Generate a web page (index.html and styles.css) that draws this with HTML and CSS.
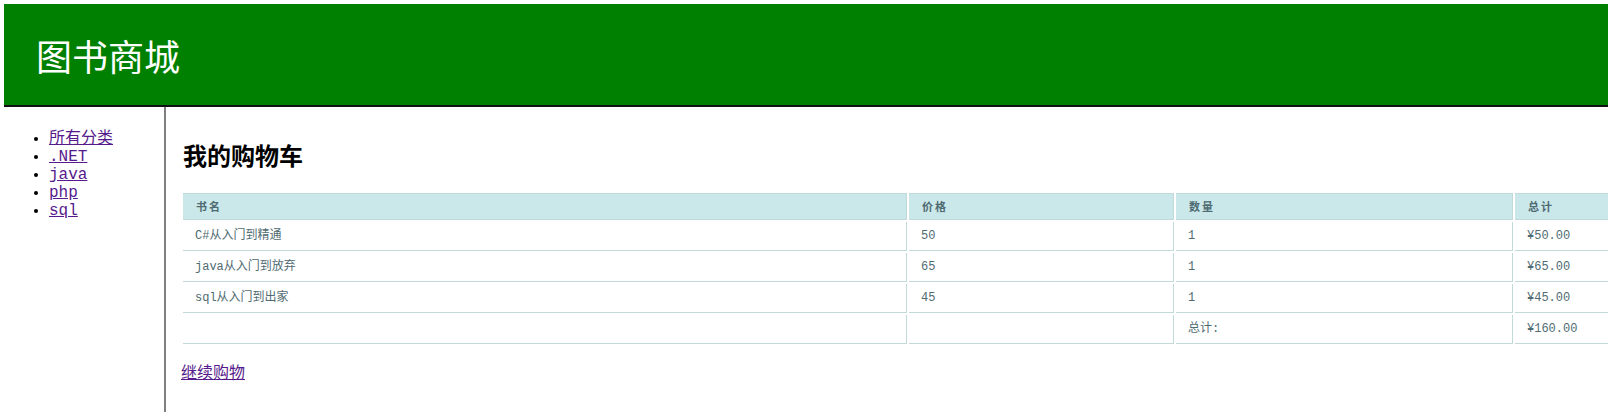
FILE: index.html
```html
<!DOCTYPE html>
<html>
<head>
  <meta charset="utf-8">
  <title>图书商城</title>
  <link rel="stylesheet" href="styles.css">
</head>
<body>
  <div class="header">
    <h1>图书商城</h1>
  </div>
  <div class="page">
    <div class="sidebar">
      <ul>
        <li><a href="#">所有分类</a></li>
        <li><a href="#">.NET</a></li>
        <li><a href="#">java</a></li>
        <li><a href="#">php</a></li>
        <li><a href="#">sql</a></li>
      </ul>
    </div>
    <div class="content">
      <h2>我的购物车</h2>
      <table class="cart">
        <tr>
          <th class="col-name">书名</th>
          <th class="col-price">价格</th>
          <th class="col-count">数量</th>
          <th class="col-total">总计</th>
        </tr>
        <tr>
          <td>C#从入门到精通</td>
          <td>50</td>
          <td>1</td>
          <td>¥50.00</td>
        </tr>
        <tr>
          <td>java从入门到放弃</td>
          <td>65</td>
          <td>1</td>
          <td>¥65.00</td>
        </tr>
        <tr>
          <td>sql从入门到出家</td>
          <td>45</td>
          <td>1</td>
          <td>¥45.00</td>
        </tr>
        <tr>
          <td></td>
          <td></td>
          <td>总计:</td>
          <td>¥160.00</td>
        </tr>
      </table>
      <p class="more"><a href="#">继续购物</a></p>
    </div>
  </div>
</body>
</html>
```

FILE: styles.css
```css
/* page frame */
body {
  margin: 4px 0 0 4px;
  font-family: "Liberation Mono", "Noto Sans CJK SC", monospace;
  font-size: 16px;
  line-height: 18px;
}
a {
  color: #551a8b;
}

.header {
  height: 101px;
  background-color: #008000;
  border-bottom: 2px solid #111;
  display: flex;
  align-items: center;
  padding-left: 32px;
}
.header h1 {
  margin: 0;
  color: #fff;
  font-family: "Noto Sans CJK SC", sans-serif;
  font-size: 36px;
  font-weight: normal;
  line-height: 40px;
}

.page {
  display: flex;
  min-height: 305px;
}
.sidebar {
  width: 160px;
  flex-shrink: 0;
  border-right: 2px solid #808080;
}
.sidebar ul {
  margin: 23px 0 0 0;
  padding-left: 45px;
}

.content {
  flex: 1;
  min-width: 0;
  overflow: hidden;
  padding: 17px 0 0 15px;
}
.content h2 {
  margin: 17px 0 22px 2px;
  font-family: "Noto Sans CJK SC", sans-serif;
  font-size: 24px;
  line-height: 28px;
}

/* cart table */
.cart {
  border-spacing: 2px;
  table-layout: fixed;
  width: 1530px;
  font-size: 12px;
  color: #4f6b72;
}
.cart th {
  box-sizing: border-box;
  height: 27px;
  padding: 6px 6px 6px 13px;
  background: #cae8ea;
  border-top: 1px solid #c1dad7;
  border-bottom: 1px solid #c1dad7;
  border-right: 1px solid #c1dad7;
  font-family: "Noto Sans CJK SC", sans-serif;
  font-size: 11px;
  font-weight: bold;
  line-height: 13px;
  letter-spacing: 2px;
  text-align: left;
}
.cart td {
  box-sizing: border-box;
  height: 29px;
  padding: 6px 6px 6px 12px;
  border-bottom: 1px solid #c1dad7;
  border-right: 1px solid #c1dad7;
  line-height: 16px;
  white-space: nowrap;
}
.col-name { width: 724px; }
.col-price { width: 265px; }
.col-count { width: 337px; }
.col-total { width: 196px; }

.more {
  margin: 16px 0 0 0;
  font-family: "Noto Sans CJK SC", sans-serif;
}
```
